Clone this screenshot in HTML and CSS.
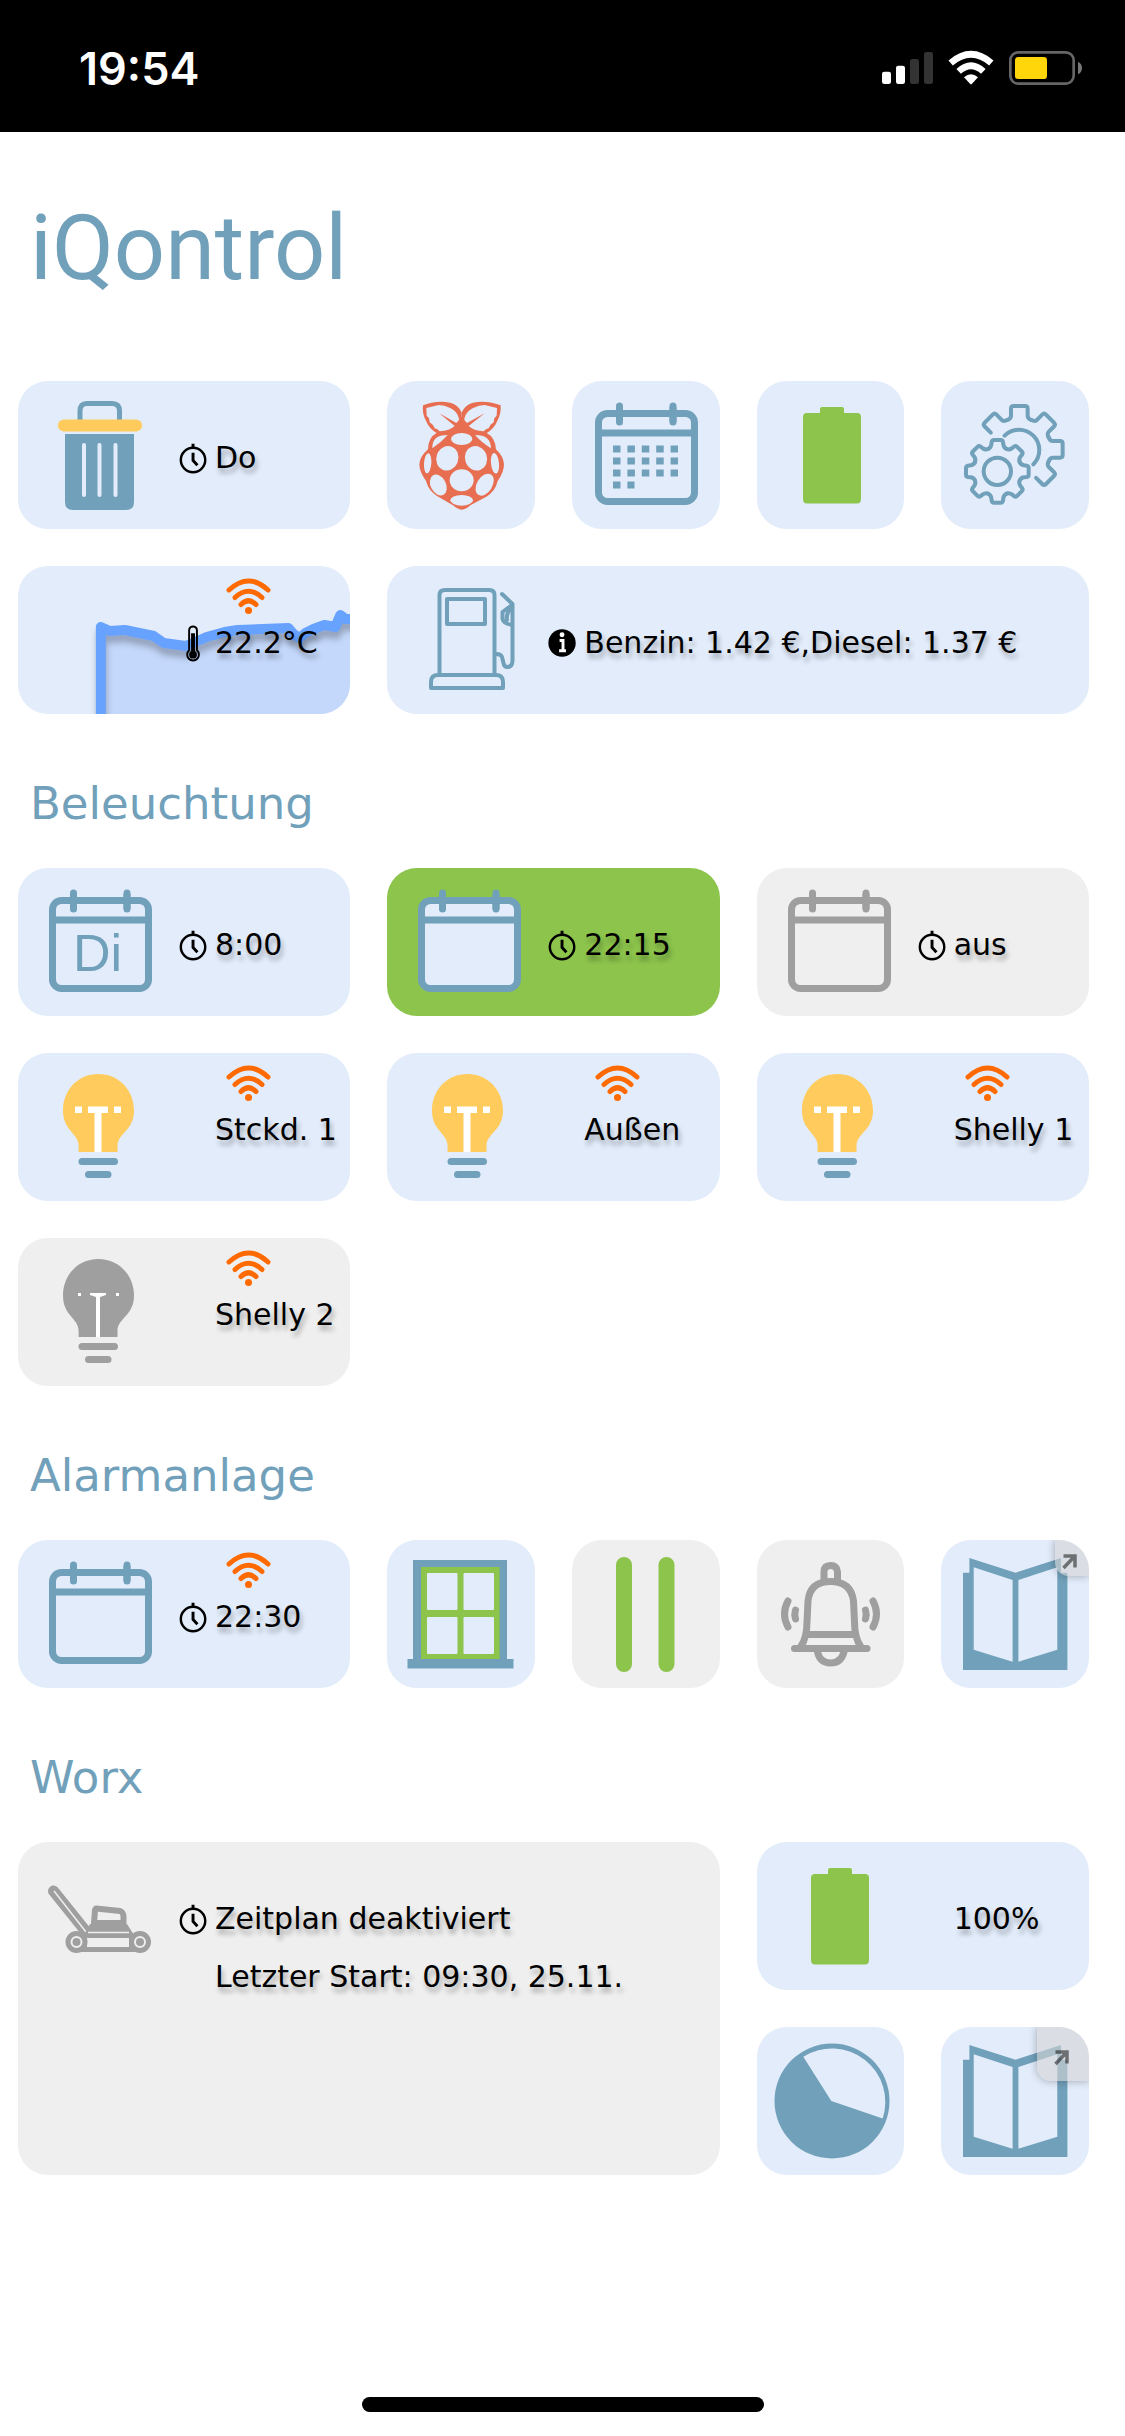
FILE: index.html
```html
<!DOCTYPE html>
<html lang="de">
<head>
<meta charset="utf-8">
<meta name="viewport" content="width=device-width, initial-scale=1">
<title>iQontrol</title>
<link rel="stylesheet" href="styles.css">
</head>
<body>
<svg class="sprite" aria-hidden="true">
  <symbol id="calendar" viewBox="0 0 148 148">
    <rect class="paper" x="26.500" y="32.500" width="96" height="88" rx="9" stroke="currentColor" stroke-width="7"/>
    <path d="M26 52H123M47.500 26V41M101 26V41" fill="none" stroke="currentColor" stroke-width="7"/>
    <path d="M47.500 25V41M101 25V41" fill="none" stroke="currentColor" stroke-width="7" stroke-linecap="round"/>
  </symbol>
  <symbol id="bulb" viewBox="0 0 148 148">
    <path class="glass" d="M52.600 99V93C52.600 80 37 78 37 57.500C37 37 52 21 72.300 21S108 37 108 57.500C108 78 91.500 80 91.500 93V99Z"/>
    <path d="M56 108.500H88.500M62.500 121.500H82" fill="none" stroke="currentColor" stroke-width="7" stroke-linecap="round"/>
  </symbol>
  <symbol id="battery" viewBox="0 0 148 148">
    <path d="M63 32V28Q63 26 65 26H85Q87 26 87 28V32H100Q104 32 104 36V118Q104 122.500 100 122.500H50Q46 122.500 46 118V36Q46 32 50 32Z" fill="#8cc44c"/>
  </symbol>
  <symbol id="book" viewBox="0 0 148 148">
    <path d="M22 32.700H28.400V18L74.500 32.700L120 18V32.700H126.400V130H22Z" fill="currentColor"/>
    <path class="paper" d="M32.700 27.300L71.600 40V121.700L32.700 109.700ZM116.300 27.300L77.400 40V121.700L116.300 109.700Z"/>
  </symbol>
  <symbol id="wifi" viewBox="0 0 45 37">
    <path d="M3 12Q22.500 -6 42 12M9 19.500Q22.500 7 36 19.500M15 26.500Q22.500 19 30 26.500" fill="none" stroke="#ff6a00" stroke-width="5" stroke-linecap="round"/>
    <circle cx="22.500" cy="32.500" r="3.500" fill="#ff6a00"/>
  </symbol>
  <symbol id="clock" viewBox="0 0 42 58">
    <circle cx="19.500" cy="31" r="12.500" fill="none" stroke="#000" stroke-width="2.500"/>
    <path d="M19.500 14.500V19M19.500 23.500V31.500L24 36.500" fill="none" stroke="#000" stroke-width="3"/>
  </symbol>
  <symbol id="thermometer" viewBox="0 0 42 58">
    <path d="M15.500 16a4 4 0 0 1 8 0V36.500a6 6 0 1 1 -8 0Z" fill="none" stroke="#000" stroke-width="2"/>
    <path d="M19.500 19V41" stroke="#000" stroke-width="4"/>
    <circle cx="19.500" cy="41" r="4" fill="#000"/>
  </symbol>
  <symbol id="info" viewBox="0 0 42 58">
    <circle cx="19.500" cy="29" r="14" fill="#000"/>
    <path d="M17 26.500H20.500V37M16.500 37H23.500" fill="none" stroke="#fff" stroke-width="3"/>
    <circle cx="19.500" cy="20.500" r="2.500" fill="#fff"/>
  </symbol>
  <symbol id="arrow" viewBox="0 0 16 16">
    <path d="M2.500 2H14V13.500M13 3L2.500 14" fill="none" stroke="currentColor" stroke-width="3.500"/>
  </symbol>
</svg>

<header class="statusbar">
  <time class="statusbar-time">19:54</time>
  <svg class="statusbar-icons" viewBox="0 0 690 240" role="img" aria-label="Mobilfunk, WLAN und Akku">
    <g fill="#fff"><rect x="36" y="128" width="27" height="37" rx="7"/><rect x="78" y="110" width="27" height="55" rx="7"/></g>
    <g fill="#333"><rect x="120" y="90" width="27" height="75" rx="7"/><rect x="162" y="69" width="27" height="96" rx="7"/></g>
    <g fill="none" stroke="#fff" stroke-width="20">
      <path d="M242 102Q303 50 364 102"/><path d="M266 127Q303 93 340 127"/>
    </g>
    <path d="M282 145Q303 126 324 145L306 164Q303 167 300 164Z" fill="#fff"/>
    <rect x="421" y="70" width="190" height="94" rx="24" fill="none" stroke="#666" stroke-width="8"/>
    <rect x="435" y="84" width="96" height="66" rx="10" fill="#ffd60a"/>
    <path d="M624 98Q636 104 636 117T624 136Z" fill="#777"/>
  </svg>
</header>

<main class="page">
  <h1 class="title">iQontrol</h1>

  <div class="tiles">
    <button class="tile wide">
      <svg class="icon" viewBox="0 0 148 148" aria-hidden="true">
        <path d="M54 39V30Q54 22.500 61 22.500H86Q93.500 22.500 93.500 30V39" fill="none" stroke="currentColor" stroke-width="5"/>
        <rect x="32" y="38.500" width="84" height="12" rx="6" fill="#ffcb5c"/>
        <path d="M39 53H108V121Q108 129 100 129H47Q39 129 39 121Z" fill="currentColor"/>
        <path d="M58 64V114M73.500 64V114M89.500 64V114" stroke="#e2ecfa" stroke-width="4" stroke-linecap="round"/>
      </svg>
      <span class="info"><span class="signal"></span><span class="line"><svg class="mark" aria-hidden="true"><use href="#clock"/></svg>Do</span></span>
    </button>
    <button class="tile" aria-label="Raspberry Pi">
      <svg class="icon" viewBox="0 3 444 444" aria-hidden="true">
        <g fill="#e86e52">
          <path d="M224 389Q214 389 198 376L150 348Q125 332 117 303Q97 275 97 253Q98 230 123 208Q123 172 150 158L224 110L298 158Q325 172 327 208Q350 230 351 253Q351 277 332 303Q325 334 298 350L250 376Q236 389 224 389Z"/>
          <path d="M224 98Q211 65 165 65Q130 66 108 76Q105 100 116 120Q125 146 152 161L224 150Z"/>
          <path d="M224 98Q237 65 283 65Q318 66 341 76Q343 100 332 120Q323 146 296 161L224 150Z"/>
        </g>
        <g fill="#e2ecfa">
          <path d="M118 84L140 79L155 75L172 77Q215 90 216 120L208 129L157 100L203 138Q188 152 158 154L150 147L143 145L138 135L128 127L126 115L119 107Z"/>
          <path d="M330 84L308 79L293 75L276 77Q233 90 232 120L240 129L293 100L245 138Q260 152 290 154L298 147L305 145L310 135L320 127L322 115L329 107Z"/>
          <ellipse cx="224" cy="177" rx="32" ry="18"/>
          <ellipse cx="181" cy="235" rx="33" ry="37" transform="rotate(20 181 235)"/>
          <ellipse cx="267" cy="235" rx="33" ry="37" transform="rotate(-20 267 235)"/>
          <ellipse cx="224" cy="301" rx="36" ry="33"/>
          <ellipse cx="154" cy="315" rx="23" ry="33" transform="rotate(-28 154 315)"/>
          <ellipse cx="293" cy="314" rx="23" ry="36" transform="rotate(32 293 314)"/>
          <ellipse cx="224" cy="361" rx="34" ry="16"/>
          <ellipse cx="122" cy="250" rx="11" ry="30" transform="rotate(4 122 250)"/>
          <ellipse cx="324" cy="250" rx="12" ry="31" transform="rotate(-6 324 250)"/>
          <path d="M136 205Q134 165 182 165Q164 186 136 205ZM312 205Q312 165 264 165Q282 186 312 205Z"/>
        </g>
      </svg>
    </button>
    <button class="tile" aria-label="Kalender">
      <svg class="icon" viewBox="0 0 148 148" aria-hidden="true">
        <use href="#calendar"/>
        <path d="M41 68H106M41 80H106M41 92H106M41 104H62.500" stroke="currentColor" stroke-width="7" stroke-dasharray="7.500 6.900"/>
      </svg>
    </button>
    <button class="tile" aria-label="Batterie"><svg class="icon" aria-hidden="true"><use href="#battery"/></svg></button>
    <button class="tile" aria-label="Einstellungen">
      <svg class="icon" viewBox="3 3 444 444" aria-hidden="true">
        <g fill="none" stroke="currentColor" stroke-width="12" stroke-linecap="round" stroke-linejoin="round">
          <g transform="translate(172 274)">
            <path id="tooth" d="M-28 -67Q-20 -70 -18 -80L-17 -88Q-16 -94 -10 -94H10Q16 -94 17 -88L18 -80Q20 -70 28 -67"/>
            <use href="#tooth" transform="rotate(45)"/><use href="#tooth" transform="rotate(90)"/>
            <use href="#tooth" transform="rotate(135)"/><use href="#tooth" transform="rotate(180)"/>
            <use href="#tooth" transform="rotate(225)"/><use href="#tooth" transform="rotate(270)"/>
            <use href="#tooth" transform="rotate(315)"/>
            <circle r="41"/>
          </g>
          <g transform="translate(238 208)">
            <path id="cog" d="M-36.400 -87.800Q-26 -91 -25 -99V-122Q-25 -130 -17 -130H17Q25 -130 25 -122V-99Q26 -91 36.400 -87.800"/>
            <use href="#cog" transform="rotate(45)"/><use href="#cog" transform="rotate(90)"/>
            <path transform="rotate(-45)" d="M-25 -96V-122Q-25 -130 -17 -130H17Q25 -130 25 -122V-99Q26 -91 36.400 -87.800"/>
            <path transform="rotate(135)" d="M-36.400 -87.800Q-26 -91 -25 -99V-122Q-25 -130 -17 -130H17Q25 -130 25 -122V-96"/>
            <path d="M-44 -41A60 60 0 0 1 42 45"/>
          </g>
        </g>
      </svg>
    </button>

    <button class="tile wide">
      <svg class="chart" viewBox="0 0 333 148" preserveAspectRatio="none" aria-hidden="true">
        <path d="M83 148V61L107 66L136 71L146 77L168 81L189 71L207 66L246 64L271 63L282 72L296 64L307 59L318 61L323 49L333 53V148Z" fill="#c4d8fb"/>
        <path class="trend" d="M83 152V61L92 65L107 64L136 70L146 77L168 80L180 75L189 71L207 66L220 64L271 62L276 68L282 72L288 67L296 63L307 59L318 61L323 49L328 53H340"/>
      </svg>
      <span class="icon"></span>
      <span class="info"><span class="signal"><svg aria-label="WLAN" role="img"><use href="#wifi"/></svg></span><span class="line"><svg class="mark" aria-hidden="true"><use href="#thermometer"/></svg>22.2°C</span></span>
    </button>
    <button class="tile broad">
      <svg class="icon" viewBox="0 0 148 148" aria-hidden="true">
        <g fill="none" stroke="currentColor" stroke-width="4" stroke-linecap="round" stroke-linejoin="round">
          <path d="M44.500 107V29Q44.500 24 50 24H94Q99.500 24 99.500 29V107"/>
          <rect x="52" y="33" width="38" height="25"/>
          <path d="M36 122V116Q36 109 43 109H101Q108 109 108 116V122Z"/>
          <path d="M107 28L117.500 38V95Q117 101 112.500 101Q109 101 108.500 97L107 91Q106 88 101 88"/>
          <path d="M117 39L107.500 46V53Q109 58 116 58.500M116 43Q111 47 112 54"/>
        </g>
      </svg>
      <span class="info"><span class="signal"></span><span class="line"><svg class="mark" aria-hidden="true"><use href="#info"/></svg>Benzin: 1.42 €,Diesel: 1.37 €</span></span>
    </button>
  </div>

  <h2 class="section">Beleuchtung</h2>
  <div class="tiles">
    <button class="tile wide">
      <svg class="icon" viewBox="0 0 148 148" aria-hidden="true"><use href="#calendar"/><text class="day" x="47" y="103">Di</text></svg>
      <span class="info"><span class="signal"></span><span class="line"><svg class="mark" aria-hidden="true"><use href="#clock"/></svg>8:00</span></span>
    </button>
    <button class="tile wide active">
      <svg class="icon" aria-hidden="true"><use href="#calendar"/></svg>
      <span class="info"><span class="signal"></span><span class="line"><svg class="mark" aria-hidden="true"><use href="#clock"/></svg>22:15</span></span>
    </button>
    <button class="tile wide off">
      <svg class="icon" aria-hidden="true"><use href="#calendar"/></svg>
      <span class="info"><span class="signal"></span><span class="line"><svg class="mark" aria-hidden="true"><use href="#clock"/></svg>aus</span></span>
    </button>
    <button class="tile wide">
      <svg class="icon" viewBox="0 0 148 148" aria-hidden="true"><use href="#bulb"/><path d="M49 53.500h7v6.500h-7zM62 53.500h20v6.500h-6.500v39h-7v-39h-6.500zM88 53.500h7v6.500h-7z" fill="#fff"/></svg>
      <span class="info"><span class="signal"><svg aria-label="WLAN" role="img"><use href="#wifi"/></svg></span><span class="line"><span class="mark"></span>Stckd. 1</span></span>
    </button>
    <button class="tile wide">
      <svg class="icon" viewBox="0 0 148 148" aria-hidden="true"><use href="#bulb"/><path d="M49 53.500h7v6.500h-7zM62 53.500h20v6.500h-6.500v39h-7v-39h-6.500zM88 53.500h7v6.500h-7z" fill="#fff"/></svg>
      <span class="info"><span class="signal"><svg aria-label="WLAN" role="img"><use href="#wifi"/></svg></span><span class="line"><span class="mark"></span>Außen</span></span>
    </button>
    <button class="tile wide">
      <svg class="icon" viewBox="0 0 148 148" aria-hidden="true"><use href="#bulb"/><path d="M49 53.500h7v6.500h-7zM62 53.500h20v6.500h-6.500v39h-7v-39h-6.500zM88 53.500h7v6.500h-7z" fill="#fff"/></svg>
      <span class="info"><span class="signal"><svg aria-label="WLAN" role="img"><use href="#wifi"/></svg></span><span class="line"><span class="mark"></span>Shelly 1</span></span>
    </button>
    <button class="tile wide off">
      <svg class="icon" viewBox="0 0 148 148" aria-hidden="true"><use href="#bulb"/><path d="M52 55h3v3h-3zM64 55h16v2l-6 2v40h-4v-40l-6 -2zM90 55h3v3h-3z" fill="#fff"/></svg>
      <span class="info"><span class="signal"><svg aria-label="WLAN" role="img"><use href="#wifi"/></svg></span><span class="line"><span class="mark"></span>Shelly 2</span></span>
    </button>
  </div>

  <h2 class="section">Alarmanlage</h2>
  <div class="tiles">
    <button class="tile wide">
      <svg class="icon" aria-hidden="true"><use href="#calendar"/></svg>
      <span class="info"><span class="signal"><svg aria-label="WLAN" role="img"><use href="#wifi"/></svg></span><span class="line"><svg class="mark" aria-hidden="true"><use href="#clock"/></svg>22:30</span></span>
    </button>
    <button class="tile" aria-label="Fenster">
      <svg class="icon" viewBox="0 0 148 148" aria-hidden="true">
        <path d="M26 20H120V119H126.500V128.500H20.500V119H26Z" fill="currentColor"/>
        <rect x="34" y="27" width="78.600" height="92" fill="#8cc44c"/>
        <g fill="#e2ecfa"><rect x="40" y="33" width="30.500" height="37" rx="1"/><rect x="76.500" y="33" width="30.500" height="37" rx="1"/><rect x="40" y="77" width="30.500" height="37" rx="1"/><rect x="76.500" y="77" width="30.500" height="37" rx="1"/></g>
      </svg>
    </button>
    <button class="tile off" aria-label="Pause">
      <svg class="icon" viewBox="0 0 148 148" aria-hidden="true"><path d="M52 25V124M94.500 25V124" stroke="#8cc44c" stroke-width="16" stroke-linecap="round"/></svg>
    </button>
    <button class="tile off" aria-label="Alarm">
      <svg class="icon" viewBox="0 0 148 148" aria-hidden="true">
        <g fill="none" stroke="currentColor" stroke-width="7" stroke-linecap="round" stroke-linejoin="round">
          <path d="M67 39V32Q67 25.500 73.500 25.500T80.500 32V39"/>
          <path d="M43.500 107Q50 98 50 82L51 61Q53 41.500 73.500 41.500T96.500 61L97.500 82Q97.500 98 104 107"/>
          <path d="M50 94.500H97M37.500 108.500H110" />
          <path d="M60.500 112Q63 123 73.500 123T87 112"/>
          <path d="M116 61Q123 74 116 87M108.500 70Q110 74.500 108.500 79M31 61Q24 74 31 87M38.500 70Q37 74.500 38.500 79"/>
        </g>
      </svg>
    </button>
    <a class="tile" href="#" aria-label="Protokoll Alarmanlage">
      <svg class="icon" aria-hidden="true"><use href="#book"/></svg>
      <span class="corner"><svg aria-hidden="true"><use href="#arrow"/></svg></span>
    </a>
  </div>

  <h2 class="section">Worx</h2>
  <div class="tiles">
    <button class="tile big off">
      <svg class="icon" viewBox="0 0 148 148" aria-hidden="true">
        <path d="M27.500 49L62 92" stroke="currentColor" stroke-width="11" stroke-linecap="round"/>
        <path d="M28 49L60 90" stroke="#efefef" stroke-width="1.500"/>
        <path d="M70 66.500L94 69Q97 70 97.500 74V81H68L69 68Z" fill="#efefef" stroke="currentColor" stroke-width="6" stroke-linejoin="round"/>
        <path d="M64 82H101L108 93H58Z" fill="currentColor"/>
        <path d="M62 90.500H103" stroke="#efefef" stroke-width="1.500"/>
        <rect x="50" y="92" width="64" height="18" fill="currentColor"/>
        <rect x="61" y="96" width="42" height="9" fill="#efefef"/>
        <circle cx="50.500" cy="100" r="11" fill="currentColor"/><circle cx="114" cy="100" r="11" fill="currentColor"/>
        <g stroke="#efefef" stroke-width="2" fill="none"><circle cx="50.500" cy="100" r="5"/><circle cx="114" cy="100" r="5"/></g>
      </svg>
      <span class="info"><span class="signal"></span><span class="line"><svg class="mark" aria-hidden="true"><use href="#clock"/></svg>Zeitplan deaktiviert</span><span class="line"><span class="mark"></span>Letzter Start: 09:30, 25.11.</span></span>
    </button>
    <button class="tile wide">
      <svg class="icon" aria-hidden="true"><use href="#battery"/></svg>
      <span class="info"><span class="signal"></span><span class="line"><span class="mark"></span>100%</span></span>
    </button>
    <button class="tile" aria-label="Statistik">
      <svg class="icon" viewBox="0 0 148 148" aria-hidden="true">
        <circle cx="75" cy="74" r="57.500" fill="currentColor"/>
        <path d="M74.300 74L46.300 29.700A53.500 53.500 0 0 1 125.700 91.500Z" fill="#e2ecfa"/>
      </svg>
    </button>
    <a class="tile" href="#" aria-label="Protokoll Worx">
      <svg class="icon" aria-hidden="true"><use href="#book"/></svg>
      <span class="corner large"><svg aria-hidden="true"><use href="#arrow"/></svg></span>
    </a>
  </div>
</main>
<footer class="home"><span class="home-bar"></span></footer>
</body>
</html>
```

FILE: styles.css
```css
* {
  box-sizing: border-box;
}

body {
  display: flex;
  flex-direction: column;
  min-height: 100vh;
  margin: 0;
  background: #fff;
  color: #000;
  font-family: "DejaVu Sans", Verdana, sans-serif;
}

.sprite {
  position: absolute;
  width: 0;
  height: 0;
}

/* Status bar */
.statusbar {
  display: flex;
  align-items: center;
  justify-content: space-between;
  height: 132px;
  padding: 6px 25px 0 79px;
  background: #000;
  color: #fff;
}

.statusbar-time {
  font: 600 45px/54px Inter, "Liberation Sans", sans-serif;
}

.statusbar-icons {
  width: 230px;
  height: 80px;
}

/* Headings */
.title {
  margin: 0;
  padding: 67px 30px 82px;
  color: #71a0ba;
  font: 400 90px/100px Roboto, "Noto Sans", sans-serif;
}

.section {
  margin: 0;
  padding: 60px 30px 34px;
  color: #71a0ba;
  font-size: 45px;
  font-weight: 400;
  line-height: 60px;
}

/* Tile grid */
.tiles {
  display: grid;
  grid-template-columns: repeat(6, 1fr);
  grid-auto-rows: minmax(148px, auto);
  gap: 37px;
  padding: 0 36px 0 18px;
}

.tile {
  --tile: #e2ecfa;
  --glass: #ffcb5c;
  position: relative;
  display: flex;
  align-items: flex-start;
  justify-content: center;
  min-width: 0;
  margin: 0;
  padding: 0;
  overflow: hidden;
  border: 0;
  border-radius: 30px;
  background: var(--tile);
  color: #71a0ba;
  font: inherit;
  text-align: left;
  text-decoration: none;
}

.tile.wide,
.tile.broad,
.tile.big {
  justify-content: flex-start;
  padding-left: 8px;
}

.tile.wide {
  grid-column: span 2;
}

.tile.broad {
  grid-column: span 4;
}

.tile.big {
  grid-column: span 4;
  grid-row: span 2;
}

.tile.active {
  background: #8cc44c;
}

.tile.off {
  --tile: #efefef;
  --glass: #9f9f9f;
  color: #9f9f9f;
}

.icon {
  flex: none;
  width: 148px;
  height: 148px;
}

.paper {
  fill: var(--tile);
}

.glass {
  fill: var(--glass);
}

.day {
  fill: currentColor;
  font: 52px "Liberation Sans", Arial, sans-serif;
}

/* Tile text */
.info {
  position: relative;
  display: flex;
  flex-direction: column;
  color: #000;
  font-size: 30px;
  line-height: 58px;
  white-space: nowrap;
  text-shadow: 2px 5px 5px rgba(0, 0, 0, 0.3);
}

.signal {
  height: 48px;
  padding: 12px 0 0 52px;
}

.signal svg {
  display: block;
  width: 45px;
  height: 37px;
}

.line {
  display: flex;
}

.mark {
  flex: none;
  width: 41px;
  height: 58px;
}

.chart {
  position: absolute;
  inset: 0;
  width: 100%;
  height: 100%;
}

.trend {
  fill: none;
  stroke: #68a2ff;
  stroke-width: 10;
  stroke-linejoin: round;
  filter: drop-shadow(1px 7px 3px rgba(0, 0, 0, 0.25));
}

/* Link badge over the tile corner */
.corner {
  position: absolute;
  top: 0;
  right: 0;
  display: flex;
  align-items: flex-end;
  width: 34px;
  height: 36px;
  padding: 0 0 6px 6px;
  border-bottom-left-radius: 14px;
  background: rgba(214, 214, 214, 0.6);
  box-shadow: 0 0 9px rgba(0, 0, 0, 0.3);
  color: rgba(0, 0, 0, 0.5);
}

.corner svg {
  width: 16px;
  height: 16px;
}

.corner.large {
  width: 52px;
  height: 54px;
  padding: 0 0 15px 16px;
}

/* Home indicator */
.home {
  display: flex;
  justify-content: center;
  margin-top: auto;
  padding: 24px 0;
}

.home-bar {
  width: 402px;
  height: 15px;
  border-radius: 8px;
  background: #000;
}
```
